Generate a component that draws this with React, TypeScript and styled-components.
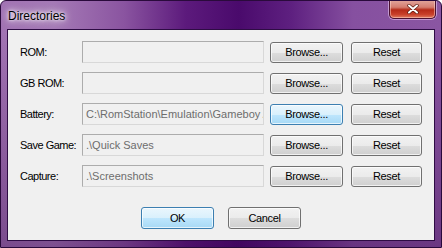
import styled, { createGlobalStyle } from "styled-components";

interface IRow {
  label: string;
  value: string;
  focused?: boolean;
}

const rows: IRow[] = [
  { label: "ROM:", value: "" },
  { label: "GB ROM:", value: "" },
  { label: "Battery:", value: "C:\\RomStation\\Emulation\\Gameboy Advance", focused: true },
  { label: "Save Game:", value: ".\\Quick Saves" },
  { label: "Capture:", value: ".\\Screenshots" },
];

const GlobalStyle = createGlobalStyle`
  html, body {
    margin: 0;
    padding: 0;
    background: #ffffff;
  }
`;

const Window = styled.div`
  width: 442px;
  height: 248px;
  box-sizing: border-box;
  border: 1px solid #2a0a3c;
  border-radius: 6px 6px 0 0;
  display: flex;
  flex-direction: column;
  background:
    linear-gradient(180deg, rgba(0, 0, 0, 0) 30px, rgba(50, 0, 70, 0.35) 100%),
    linear-gradient(
      90deg,
      #a173b3 0%,
      #a57ab6 12%,
      #8a54a0 28%,
      #5c1a7c 42%,
      #4a0a6c 54%,
      #5e2080 66%,
      #8650a0 80%,
      #8a56a2 100%
    );
  overflow: hidden;
`;

const TitleBar = styled.div`
  height: 28px;
  display: flex;
  justify-content: space-between;
  align-items: flex-start;
  padding-left: 7px;
  padding-right: 5px;
`;

const Title = styled.span`
  font-family: "Liberation Sans", Arial, sans-serif;
  font-size: 12px;
  color: #000000;
  line-height: 14px;
  margin-top: 8px;
  text-shadow: 0 0 6px #ffffff, 0 0 10px #ffffff, 0 0 3px #ffffff;
`;

const CloseButton = styled.div`
  width: 47px;
  height: 19px;
  margin-top: -1px;
  box-sizing: border-box;
  border: 1px solid #4a1030;
  border-top: none;
  border-radius: 0 0 5px 5px;
  background: linear-gradient(180deg, #e2a79e 0%, #d47d70 40%, #b52a18 55%, #c8402a 80%, #e07a60 100%);
  box-shadow: 0 0 0 1px rgba(230, 200, 240, 0.6), inset 0 0 0 1px rgba(255, 220, 210, 0.5);
  display: flex;
  align-items: center;
  justify-content: center;
`;

const Client = styled.div`
  flex: 1;
  margin: 0 6px 6px 6px;
  border: 1px solid #2e0c44;
  background: #f0f0f0;
  display: flex;
  flex-direction: column;
  padding: 11px 9px 0 12px;
  font-family: "Liberation Sans", Arial, sans-serif;
  font-size: 11px;
  letter-spacing: -0.35px;
  color: #000000;
`;

const Rows = styled.div`
  display: flex;
  flex-direction: column;
  gap: 9px;
`;

const Row = styled.div`
  display: grid;
  grid-template-columns: 56px 182px 73px 73px;
  column-gap: 6px;
  align-items: center;
  height: 22px;

  & > :last-child {
    margin-left: 2px;
  }
`;

const Label = styled.span`
  white-space: nowrap;
  letter-spacing: -0.5px;
`;

const Field = styled.div`
  height: 22px;
  min-width: 0;
  box-sizing: border-box;
  border: 1px solid #acacac;
  border-right-color: #d8d8d8;
  border-bottom-color: #d8d8d8;
  background: #f0f0f0;
  color: #6d6d6d;
  letter-spacing: 0;
  padding: 0 3px;
  display: flex;
  align-items: center;
  white-space: nowrap;
  overflow: hidden;
`;

const Button = styled.div<{ $blue?: boolean }>`
  height: 21px;
  box-sizing: border-box;
  border: 1px solid ${(p) => (p.$blue ? "#3c7fb1" : "#707070")};
  border-radius: 3px;
  background: ${(p) =>
    p.$blue
      ? "linear-gradient(180deg, #eaf6fd 0%, #d9f0fc 50%, #bee6fd 51%, #a7d9f5 100%)"
      : "linear-gradient(180deg, #f2f2f2 0%, #ebebeb 50%, #dddddd 51%, #cfcfcf 100%)"};
  box-shadow: inset 0 0 0 1px rgba(255, 255, 255, 0.7);
  display: flex;
  align-items: center;
  justify-content: center;
  color: #000000;
`;

const Footer = styled.div`
  display: flex;
  justify-content: center;
  gap: 14px;
  margin-top: 20px;
  padding-right: 3px;

  & > * {
    width: 73px;
    height: 22px;
  }
`;

const App = () => {
  return (
    <>
      <GlobalStyle />
      <Window>
        <TitleBar>
          <Title>Directories</Title>
          <CloseButton>
            <svg width="12" height="10" viewBox="0 0 12 10">
              <path
                d="M2 1.5 L10 8.5 M10 1.5 L2 8.5"
                stroke="#5a1a10"
                strokeWidth="3.4"
                strokeLinecap="round"
              />
              <path
                d="M2 1.5 L10 8.5 M10 1.5 L2 8.5"
                stroke="#ffffff"
                strokeWidth="2"
                strokeLinecap="round"
              />
            </svg>
          </CloseButton>
        </TitleBar>
        <Client>
          <Rows>
            {rows.map((row) => (
              <Row key={row.label}>
                <Label>{row.label}</Label>
                <Field>{row.value}</Field>
                <Button $blue={row.focused}>Browse...</Button>
                <Button>Reset</Button>
              </Row>
            ))}
          </Rows>
          <Footer>
            <Button $blue>OK</Button>
            <Button>Cancel</Button>
          </Footer>
        </Client>
      </Window>
    </>
  );
};

export default App;
